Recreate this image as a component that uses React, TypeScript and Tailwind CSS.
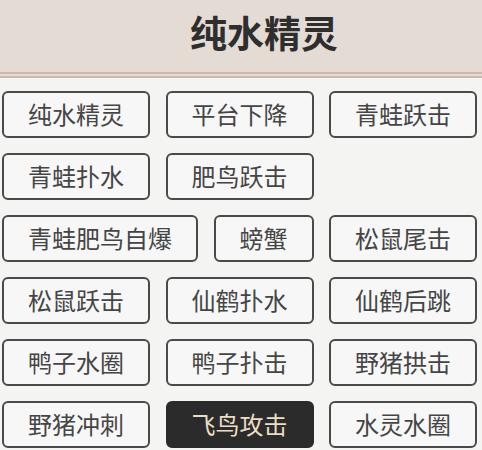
const skills = [
  "纯水精灵",
  "平台下降",
  "青蛙跃击",
  "青蛙扑水",
  "肥鸟跃击",
  "青蛙肥鸟自爆",
  "螃蟹",
  "松鼠尾击",
  "松鼠跃击",
  "仙鹤扑水",
  "仙鹤后跳",
  "鸭子水圈",
  "鸭子扑击",
  "野猪拱击",
  "野猪冲刺",
  "飞鸟攻击",
  "水灵水圈",
];

const active = "飞鸟攻击";

export default function App() {
  return (
    <div
      className="w-[482px] h-[450px] overflow-hidden bg-[#f4f4f3]"
      style={{ fontFamily: '"Noto Sans", "Noto Sans CJK SC", sans-serif' }}
    >
      <div className="h-[72px] bg-[#e3dbd4] flex items-center justify-center pl-[46px] pb-[6px]">
        <h1 className="text-[37px] font-bold text-[#2e2e2e] leading-none">
          纯水精灵
        </h1>
      </div>
      <div className="h-[2px] bg-[#cdb8ae]" />
      <div className="h-[2px] bg-[#e6dcd6]" />
      <div className="h-[2px] bg-[#c9bab3]" />
      <div className="flex flex-wrap gap-x-[15.5px] gap-y-[15px] pl-[2px] pt-[13px]">
        {skills.map((s) => (
          <button
            key={s}
            className={
              s === active
                ? "h-[47px] px-[24px] rounded-[6px] border-2 border-[#2a2a2a] bg-[#2b2b2b] text-[#eadfc4] text-[24px] leading-none whitespace-nowrap"
                : "h-[47px] px-[24px] rounded-[6px] border-2 border-[#4a4a4a] bg-[#f7f7f7] text-[#454545] text-[24px] leading-none whitespace-nowrap"
            }
          >
            {s}
          </button>
        ))}
      </div>
    </div>
  );
}
